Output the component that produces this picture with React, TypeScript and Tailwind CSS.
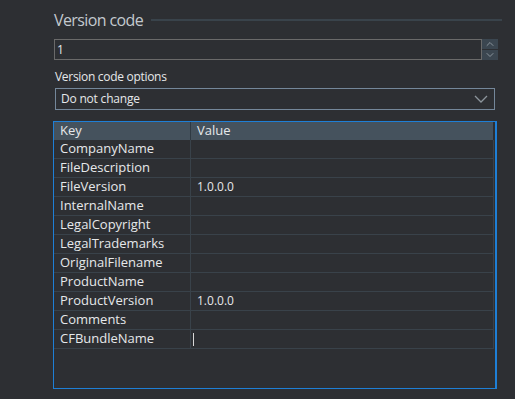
import { ChevronDown, ChevronUp } from "lucide-react";

const rows: [string, string][] = [
  ["CompanyName", ""],
  ["FileDescription", ""],
  ["FileVersion", "1.0.0.0"],
  ["InternalName", ""],
  ["LegalCopyright", ""],
  ["LegalTrademarks", ""],
  ["OriginalFilename", ""],
  ["ProductName", ""],
  ["ProductVersion", "1.0.0.0"],
  ["Comments", ""],
  ["CFBundleName", ""],
];

export default function App() {
  return (
    <div
      className="w-[515px] h-[399px] bg-[#2d2f33] text-[#e6e8ea] overflow-hidden"
      style={{ fontFamily: '"Open Sans", "Noto Sans", sans-serif' }}
    >
      <div className="pl-[54px] pt-[9px] flex flex-col">
        {/* section header */}
        <div className="flex items-center h-[22px] pr-[13px]">
          <span className="text-[16px] text-[#c3c9cf] tracking-[-0.6px] leading-none">Version code</span>
          <div className="flex-1 h-[2px] bg-[#39434b] ml-[8px]" />
        </div>

        {/* numeric input */}
        <div className="flex mt-[8px] h-[21px]">
          <div className="w-[428px] border border-[#6a6a6a] flex items-center pl-[2px] text-[12px]">1</div>
          <div className="flex flex-col gap-px w-[16px]">
            <div className="h-[10px] bg-[#3b4650] flex items-center justify-center">
              <ChevronUp className="w-[12px] h-[12px] text-[#8a949c]" strokeWidth={2} />
            </div>
            <div className="h-[10px] bg-[#3b4650] flex items-center justify-center">
              <ChevronDown className="w-[12px] h-[12px] text-[#8a949c]" strokeWidth={2} />
            </div>
          </div>
        </div>

        {/* label */}
        <div className="mt-[8px] pl-px text-[12px] leading-[18px] tracking-[-0.3px]">Version code options</div>

        {/* dropdown */}
        <div className="mt-[2px] ml-px w-[440px] h-[22px] border border-[#74879a] flex items-center justify-between pl-[5px] pr-[6px] text-[12px] tracking-[-0.2px]">
          <span>Do not change</span>
          <svg width="14" height="8" viewBox="0 0 14 8" className="text-[#8c959c]">
            <path d="M1 1 L7 7 L13 1" fill="none" stroke="currentColor" strokeWidth="1.3" />
          </svg>
        </div>

        {/* table */}
        <div className="mt-[11px] -ml-px w-[444px] h-[268px] border border-[#1e7fd6] border-r-2 flex flex-col text-[13px]">
          <div className="flex h-[18px] bg-[#45525d] mr-[2px]">
            <div className="w-[137px] pl-[6px] flex items-center border-r border-[#2f3a43]">Key</div>
            <div className="flex-1 pl-[6px] flex items-center">Value</div>
          </div>
          <div className="flex flex-col w-[440px] border-r border-[#3a4149]">
            {rows.map(([k, v]) => (
              <div key={k} className="flex h-[19px] border-b border-[#39424a]">
                <div className="w-[137px] pl-[6px] flex items-center border-r border-[#39424a]">{k}</div>
                <div className="flex-1 pl-[6px] flex items-center relative text-[12px]">
                  {k === "CFBundleName" ? (
                    <div className="absolute left-[2px] top-[3px] w-px h-[13px] bg-[#d8d8d8]" />
                  ) : (
                    v
                  )}
                </div>
              </div>
            ))}
          </div>
        </div>
      </div>
    </div>
  );
}
